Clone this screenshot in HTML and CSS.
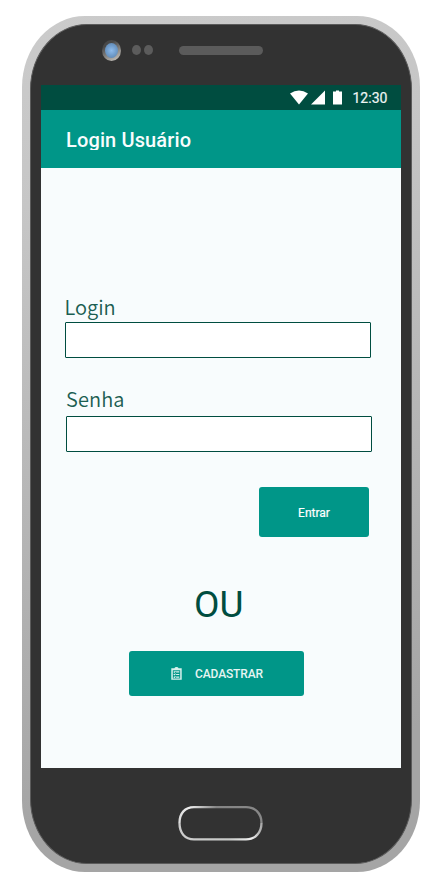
FILE: index.html
```html
<!DOCTYPE html>
<html lang="pt-BR">
<head>
<meta charset="utf-8">
<title>Login Usuário</title>
<link rel="stylesheet" href="styles.css">
</head>
<body>
<div class="phone">
  <div class="face">
    <div class="sensors">
      <span class="camera"><span class="lens"></span></span>
      <span class="dot"></span>
      <span class="dot"></span>
      <span class="speaker"></span>
    </div>
    <main class="screen">
      <div class="status">
        <svg width="54" height="16" viewBox="0 0 54 16" fill="#fff">
          <path d="M0 3.6Q9-2.4 18 3.6L9 14.4Z"/>
          <path d="M21 14.4H35V.6Z"/>
          <path d="M43 1.4H46V.4H49V1.4H52V14.4H43Z"/>
        </svg>
        <span class="time">12:30</span>
      </div>
      <header class="appbar"><h1 class="title">Login Usuário</h1></header>
      <form class="form">
        <div class="field">
          <label class="label" for="login">Login</label>
          <input class="input" id="login" type="text">
        </div>
        <div class="field field-password">
          <label class="label" for="senha">Senha</label>
          <input class="input" id="senha" type="password">
        </div>
        <button class="button enter" type="button"><span class="enter-text">Entrar</span></button>
        <div class="or">OU</div>
        <button class="button register" type="button">
          <svg class="clipboard" width="11" height="13" viewBox="0 0 11 13">
            <path fill="#d8f1ed" fill-rule="evenodd" d="M.3 1.2H3.4Q3.8.1 5.5.1T7.6 1.2H10.7V12.8H.3ZM1.8 3.2V11.4H9.2V3.2Z"/>
            <path fill="none" stroke="#d8f1ed" stroke-width="1.1" d="M2.7 4.6L3.4 5.2L4.5 4.1M5.1 4.9H8.3M2.7 7.2L3.4 7.8L4.5 6.7M5.1 7.5H8.3M2.7 9.8L3.4 10.4L4.5 9.3M5.1 10.1H8.3"/>
          </svg>
          <span class="register-text">CADASTRAR</span>
        </button>
      </form>
    </main>
    <div class="home">
      <svg width="86" height="36" viewBox="0 0 86 36">
        <defs>
          <linearGradient id="rim" x1="0" y1="0" x2="1" y2="0">
            <stop offset="0" stop-color="#ddd"/>
            <stop offset=".12" stop-color="#eee"/>
            <stop offset=".45" stop-color="#858585"/>
            <stop offset="1" stop-color="#888"/>
          </linearGradient>
          <linearGradient id="rim-low" x1="0" y1="0" x2="1" y2="0">
            <stop offset="0" stop-color="#ccc"/>
            <stop offset=".6" stop-color="#c8cac8"/>
            <stop offset=".88" stop-color="#eee"/>
            <stop offset="1" stop-color="#aaa"/>
          </linearGradient>
        </defs>
        <path fill="none" stroke="url(#rim)" stroke-width="2.3" d="M2.5 18C2.5 8 8 2.2 17 2.2H69C78 2.2 84.5 8 84.5 18"/>
        <path fill="none" stroke="url(#rim-low)" stroke-width="2.3" d="M2.5 18C2.5 28 8 34.3 17 34.3H69C78 34.3 84.5 28 84.5 18"/>
      </svg>
    </div>
  </div>
</div>
</body>
</html>
```
FILE: styles.css
```css
* { box-sizing: border-box; }
body {
  margin: 0;
  height: 890px;
  padding: 16px 20px 0 22px;
  background: #fff;
  font-family: Roboto, sans-serif;
  overflow: hidden;
}
.phone {
  width: 398px;
  height: 856px;
  padding: 8px;
  border-radius: 63px / 71px;
  background: linear-gradient(165deg, #cbcbcb 0%, #c6c6c6 20%, #a5a5a5 85%, #a5a5a5 100%);
}
.face {
  display: flex;
  flex-direction: column;
  height: 840px;
  border: 1px solid #5b5b5b;
  border-radius: 57px / 65px;
  background: #323232;
  padding: 0 10px;
}
.sensors {
  display: flex;
  align-items: center;
  height: 60px;
  padding: 0 0 10px 61px;
}
.camera {
  display: flex;
  justify-content: center;
  width: 19px;
  height: 21px;
  padding-top: 3px;
  margin-right: 11px;
  border-radius: 50%;
  background: linear-gradient(150deg, #484848 25%, #b8b5b0 85%);
}
.lens {
  width: 13px;
  height: 15px;
  border-radius: 50%;
  background: radial-gradient(circle at 50% 50%, #8fbcec 0%, #729fce 45%, #587da6 100%);
}
.dot {
  width: 9px;
  height: 10px;
  margin-right: 3px;
  border-radius: 50%;
  background: #5c5c5c;
}
.speaker {
  width: 84px;
  height: 9px;
  margin-left: 23px;
  border-radius: 5px;
  background: #5b5b5b;
}
.screen {
  width: 360px;
  height: 683px;
  background: #f8fcfd;
}
.status {
  display: flex;
  align-items: center;
  height: 25px;
  padding-left: 249px;
  background: #004d40;
}
.time {
  margin-left: 8.5px;
  padding-top: 1px;
  color: #f0f5f4;
  font-size: 14px;
  font-weight: 400;
  line-height: 25px;
  -webkit-text-stroke: 0.2px #f0f5f4;
}
.appbar {
  height: 58px;
  padding: 18px 25px 0;
  background: #009688;
}
.title {
  height: 22px;
  margin: 0;
  overflow: hidden;
  color: #f8fcfd;
  font-size: 20px;
  font-weight: 500;
  letter-spacing: 0.13px;
  line-height: 24px;
}
.form {
  display: flex;
  flex-direction: column;
  padding: 124px 29px 0 24px;
}
.field {
  display: flex;
  flex-direction: column;
  width: 306px;
}
.field-password {
  margin: 26px 0 0 1px;
}
.label {
  height: 30px;
  margin-left: -0.5px;
  color: #1c5f52;
  font-family: "Noto Sans CJK SC", "Noto Sans", sans-serif;
  font-size: 20px;
  font-weight: 350;
  line-height: 30px;
}
.field-password .label {
  height: 32px;
  margin-left: 0;
  letter-spacing: 0.1px;
}
.input {
  width: 306px;
  height: 36px;
  padding: 0 8px;
  border: 1px solid #004d40;
  border-radius: 1px;
  outline: 0;
  background: #fff;
}
.button {
  display: flex;
  align-items: center;
  border: 0;
  border-radius: 3px;
  background: #009688;
  color: #e6f5f3;
  font-family: Roboto, sans-serif;
  font-size: 12px;
  font-weight: 500;
  line-height: 14px;
}
.enter {
  justify-content: center;
  width: 110px;
  height: 50px;
  margin: 35px 0 0 194px;
  padding-top: 3px;
  color: #fff;
  font-weight: 400;
  -webkit-text-stroke: 0.2px #fff;
}
.or {
  height: 42px;
  margin: 46px 0 26px 129px;
  color: #004d40;
  font-size: 37px;
  line-height: 43px;
}
.register {
  width: 175px;
  height: 45px;
  margin-left: 64px;
  padding: 0 0 0 42px;
}
.register-text {
  margin-left: 13px;
  letter-spacing: -0.12px;
}
.home {
  display: flex;
  padding: 37px 0 0 136px;
}
```
